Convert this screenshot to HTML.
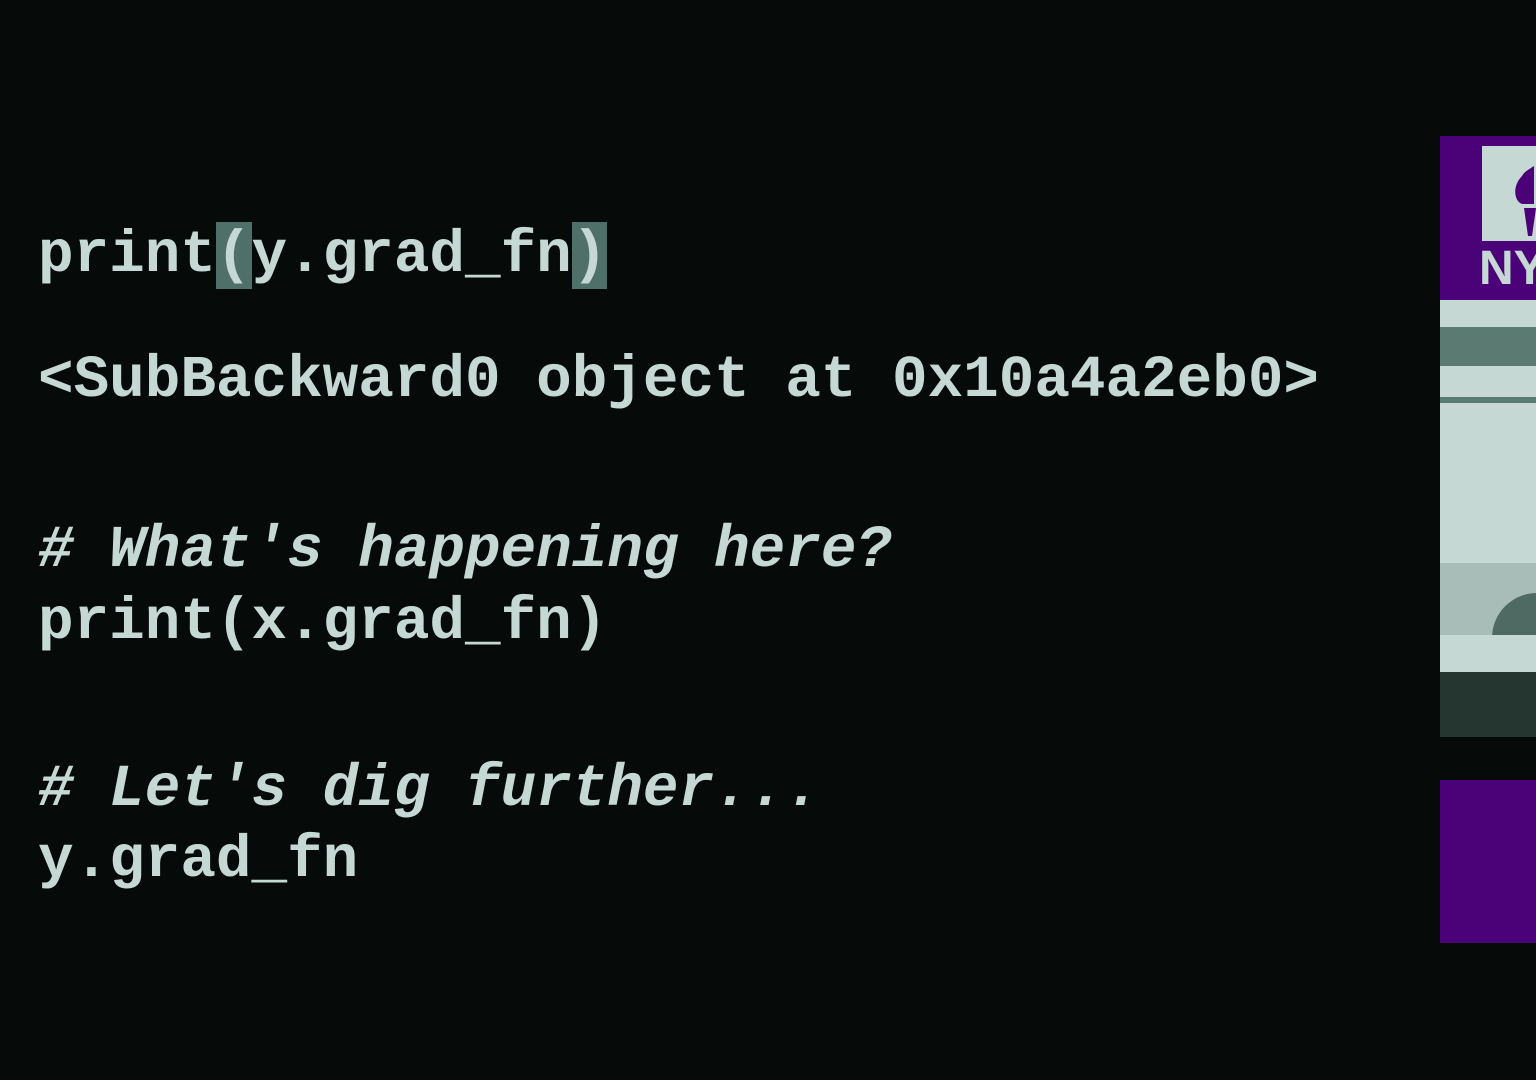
<!DOCTYPE html>
<html><head><meta charset="utf-8"><style>
html,body{margin:0;padding:0;background:#060a08;width:1536px;height:1080px;overflow:hidden;position:relative}
.l{position:absolute;left:38px;font-family:"Liberation Mono",monospace;font-weight:bold;font-size:59.3px;line-height:59px;color:#c5d8d3;white-space:pre}
.i{font-style:italic}
.h{background:#4f7068}
.b{position:absolute;left:1440px;width:96px}
</style></head><body>
<div class="l" style="top:226px">print<span class="h">(</span>y.grad_fn<span class="h">)</span></div>
<div class="l" style="top:351px">&lt;SubBackward0 object at 0x10a4a2eb0&gt;</div>
<div class="l i" style="top:521px"># What's happening here?</div>
<div class="l" style="top:593px">print(x.grad_fn)</div>
<div class="l i" style="top:760px"># Let's dig further...</div>
<div class="l" style="top:831px">y.grad_fn</div>

<div class="b" style="top:136px;height:164px;background:#4b0278"></div>
<div class="b" style="top:146px;left:1482px;width:54px;height:95px;background:#c5d8d3"></div>
<svg style="position:absolute;left:1482px;top:146px" width="54" height="95">
<path d="M40 30 C30 40 32 55 40 58 L52 58 L52 20 C46 24 42 26 40 30Z" fill="#4b0278"/>
<path d="M42 62 L54 62 L50 90 L46 90Z" fill="#4b0278"/>
</svg>
<div style="position:absolute;left:1479px;top:245px;font-family:'Liberation Sans',sans-serif;font-weight:bold;font-size:48px;line-height:48px;color:#c5d8d3">NYU</div>
<div class="b" style="top:300px;height:27px;background:#c5d8d3"></div>
<div class="b" style="top:327px;height:39px;background:#5a7a72"></div>
<div class="b" style="top:366px;height:31px;background:#c5d8d3"></div>
<div class="b" style="top:397px;height:6px;background:#5a7a72"></div>
<div class="b" style="top:403px;height:160px;background:#c5d8d3"></div>
<div class="b" style="top:563px;height:72px;background:#a8bdb7;overflow:hidden"><div style="position:absolute;left:52px;top:30px;width:90px;height:90px;border-radius:50%;background:#4f6a63"></div></div>
<div class="b" style="top:635px;height:37px;background:#c5d8d3"></div>
<div class="b" style="top:672px;height:65px;background:#25352f"></div>
<div class="b" style="top:780px;height:163px;background:#4b0278"></div>
</body></html>
